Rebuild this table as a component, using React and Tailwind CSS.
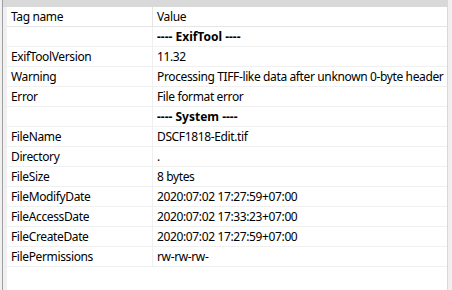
const rows = [
  { section: "---- ExifTool ----" },
  { tag: "ExifToolVersion", value: "11.32" },
  { tag: "Warning", value: "Processing TIFF-like data after unknown 0-byte header" },
  { tag: "Error", value: "File format error" },
  { section: "---- System ----" },
  { tag: "FileName", value: "DSCF1818-Edit.tif" },
  { tag: "Directory", value: "." },
  { tag: "FileSize", value: "8 bytes" },
  { tag: "FileModifyDate", value: "2020:07:02 17:27:59+07:00" },
  { tag: "FileAccessDate", value: "2020:07:02 17:33:23+07:00" },
  { tag: "FileCreateDate", value: "2020:07:02 17:27:59+07:00" },
  { tag: "FilePermissions", value: "rw-rw-rw-" },
];

const Cell = ({ children, bold, last }) => (
  <div
    className={`flex h-[20px] items-center overflow-hidden whitespace-nowrap border-b border-[#f0f0f0] pl-[4px] ${
      last ? "" : "border-r"
    } ${bold ? "font-bold tracking-[0px]" : ""}`}
  >
    {children}
  </div>
);

const App = () => {
  return (
    <div
      className="flex h-[290px] w-[452px] overflow-hidden bg-white text-[12px] tracking-[-0.37px] text-black"
      style={{ fontFamily: '"Noto Sans", "Open Sans", sans-serif' }}
    >
      <div className="w-[2px] bg-[#f0f0f0]" />
      <div className="w-px bg-[#a0a0a0]" />
      <div className="flex flex-1 flex-col">
        <div className="h-[7px] bg-[#d9d9d9]" />
        <div className="flex flex-1">
          <div className="w-[4px] bg-[#f0f0f0]" />
          <div className="flex-1 border-r border-[#d9d9d9]">
            <div className="grid grid-cols-[146px_1fr]">
              <div className="flex h-[20px] items-center border-b border-r border-[#e5e5e5] pl-[4px]">Tag name</div>
              <div className="flex h-[20px] items-center border-b border-[#e5e5e5] pl-[4px]">Value</div>
              {rows.map((r, i) => (
                <div key={i} className="contents">
                  <Cell>{r.tag ?? ""}</Cell>
                  <Cell bold={!!r.section} last>
                    {r.section ?? r.value}
                  </Cell>
                </div>
              ))}
            </div>
          </div>
        </div>
      </div>
      <div className="w-[4px] bg-[#f0f0f0]" />
    </div>
  );
};

export default App;
